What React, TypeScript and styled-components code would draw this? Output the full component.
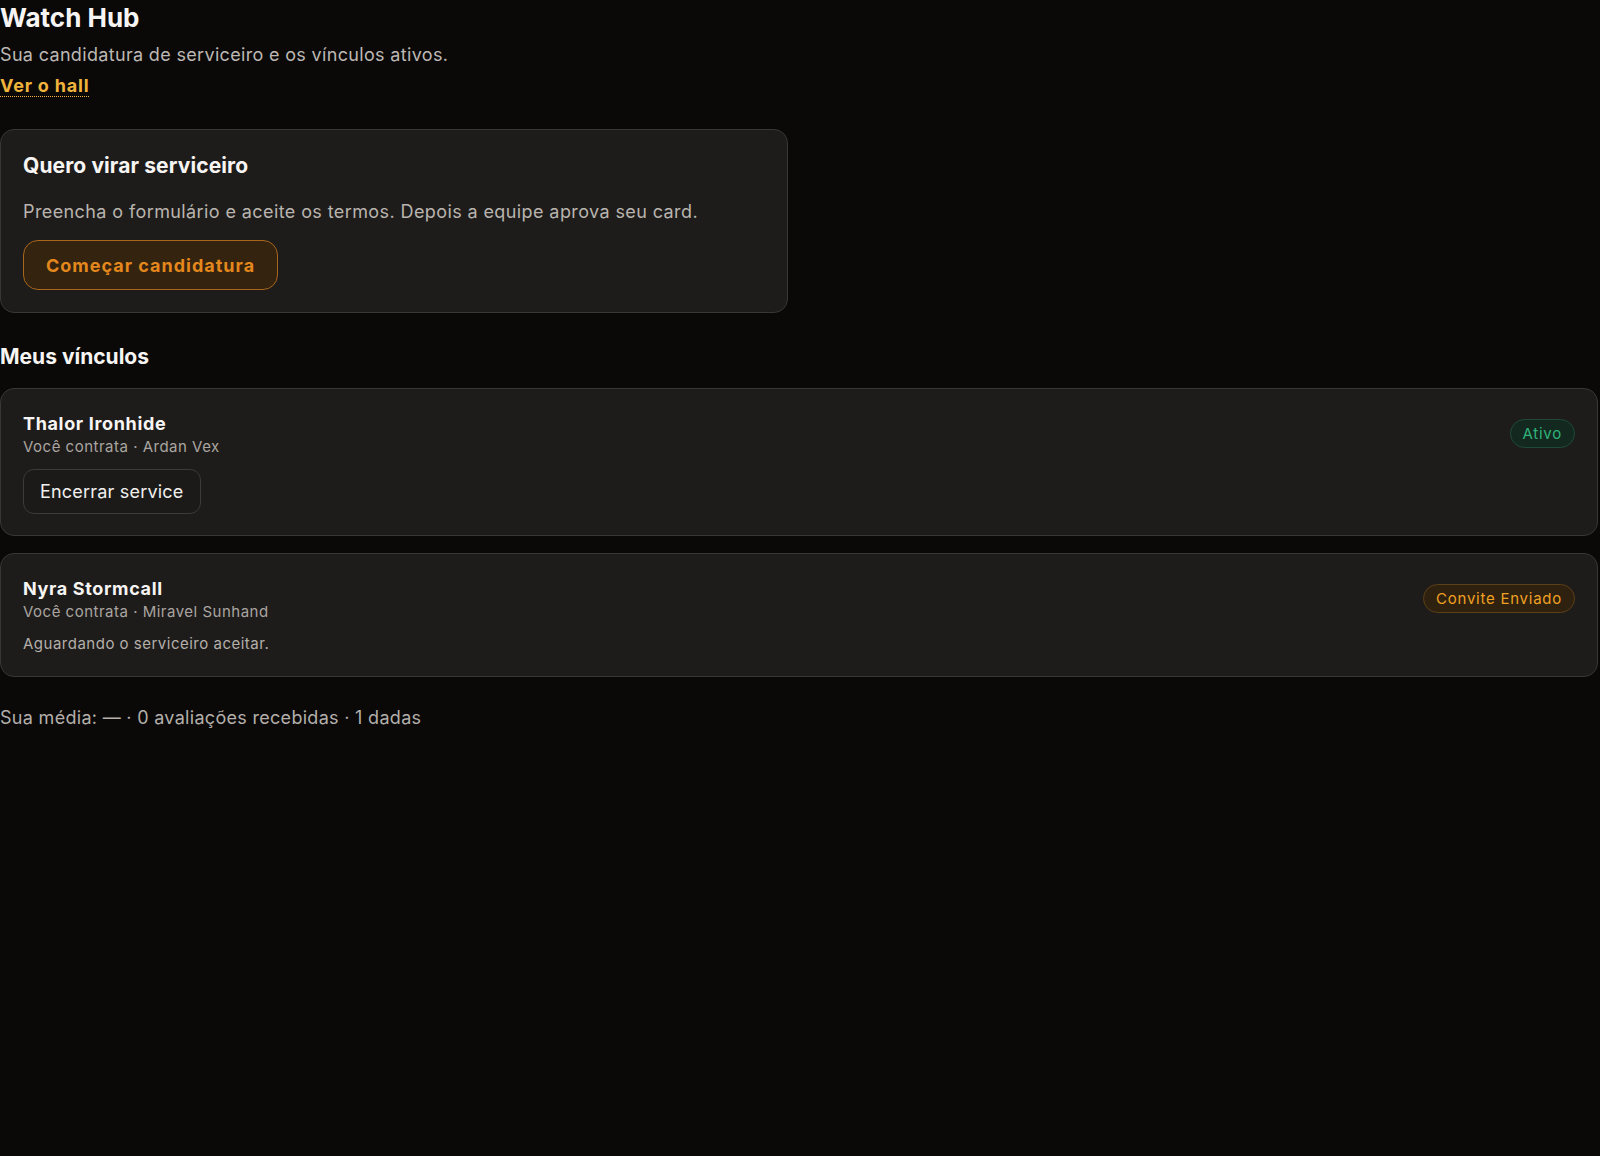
import React from 'react'
import styled, { createGlobalStyle } from 'styled-components'

const GlobalStyle = createGlobalStyle`
	html, body {
		margin: 0;
		padding: 0;
		background: #0a0908;
	}
	body {
		font-family: Inter, 'Noto Sans', 'Liberation Sans', sans-serif;
		color: #f2f0ee;
	}
`

type Tone = 'green' | 'amber'

interface Bond {
	name: string
	partner: string
	status: string
	tone: Tone
	note?: string
	canEnd?: boolean
}

const bonds: Bond[] = [
	{
		name: 'Thalor Ironhide',
		partner: 'Ardan Vex',
		status: 'Ativo',
		tone: 'green',
		canEnd: true,
	},
	{
		name: 'Nyra Stormcall',
		partner: 'Miravel Sunhand',
		status: 'Convite Enviado',
		tone: 'amber',
		note: 'Aguardando o serviceiro aceitar.',
	},
]

export default function App() {
	return (
		<Page>
			<GlobalStyle />
			<Header>
				<Title>Watch Hub</Title>
				<Subtitle>Sua candidatura de serviceiro e os vínculos ativos.</Subtitle>
				<HallLink href="#">Ver o hall</HallLink>
			</Header>

			<ApplyCard>
				<CardTitle>Quero virar serviceiro</CardTitle>
				<CardText>
					Preencha o formulário e aceite os termos. Depois a equipe aprova seu card.
				</CardText>
				<PrimaryButton>Começar candidatura</PrimaryButton>
			</ApplyCard>

			<SectionTitle>Meus vínculos</SectionTitle>
			<BondList>
				{bonds.map((b) => (
					<BondCard key={b.name}>
						<BondInfo>
							<BondName>{b.name}</BondName>
							<BondMeta>Você contrata · {b.partner}</BondMeta>
							{b.canEnd && <GhostButton>Encerrar service</GhostButton>}
							{b.note && <BondNote>{b.note}</BondNote>}
						</BondInfo>
						<Badge $tone={b.tone}>{b.status}</Badge>
					</BondCard>
				))}
			</BondList>

			<Summary>Sua média: — · 0 avaliações recebidas · 1 dadas</Summary>
		</Page>
	)
}

const Page = styled.main`
	display: flex;
	flex-direction: column;
	width: 1598px;
`

const Header = styled.header`
	display: flex;
	flex-direction: column;
	align-items: flex-start;
`

const Title = styled.h1`
	margin: 0;
	font-size: 26px;
	line-height: 36px;
	font-weight: 700;
	letter-spacing: 0;
	color: #f7f5f3;
`

const Subtitle = styled.p`
	margin: 1px 0 0;
	font-size: 18px;
	line-height: 36px;
	letter-spacing: 0.33px;
	color: #bdb8b3;
`

const HallLink = styled.a`
	font-size: 18px;
	line-height: 26px;
	font-weight: 700;
	letter-spacing: 0.8px;
	color: #f0b43c;
	text-decoration: underline dotted;
	text-underline-offset: 4px;
	text-decoration-thickness: 1px;
`

const Card = styled.section`
	box-sizing: border-box;
	background: #1e1c1b;
	border: 1px solid #393634;
	border-radius: 14px;
`

const ApplyCard = styled(Card)`
	width: 788px;
	margin-top: 30px;
	padding: 20px 22px 22px;
	display: flex;
	flex-direction: column;
	align-items: flex-start;
`

const CardTitle = styled.h2`
	margin: 0;
	font-size: 21px;
	line-height: 32px;
	font-weight: 700;
	letter-spacing: 0.1px;
	color: #f7f5f3;
`

const CardText = styled.p`
	margin: 17px 0 0;
	font-size: 18px;
	line-height: 26px;
	letter-spacing: 0.4px;
	color: #b9b4ae;
`

const PrimaryButton = styled.button`
	margin-top: 15px;
	height: 50px;
	padding: 0 22px;
	border-radius: 15px;
	border: 1px solid #a8661c;
	background: #33230f;
	color: #e4871c;
	font-family: inherit;
	font-size: 18px;
	font-weight: 700;
	letter-spacing: 1px;
	cursor: pointer;
`

const SectionTitle = styled.h2`
	margin: 29px 0 0;
	font-size: 21px;
	line-height: 30px;
	font-weight: 700;
	letter-spacing: 0;
	color: #f7f5f3;
`

const BondList = styled.div`
	margin-top: 16px;
	display: flex;
	flex-direction: column;
	gap: 17px;
`

const BondCard = styled(Card)`
	display: flex;
	justify-content: space-between;
	align-items: flex-start;
	padding: 24px 22px 21px;
`

const BondInfo = styled.div`
	display: flex;
	flex-direction: column;
	align-items: flex-start;
`

const BondName = styled.div`
	font-size: 18px;
	line-height: 22px;
	font-weight: 700;
	letter-spacing: 0.65px;
	color: #f7f5f3;
`

const BondMeta = styled.div`
	font-size: 15px;
	line-height: 24px;
	letter-spacing: 0.5px;
	color: #aaa5a0;
`

const GhostButton = styled.button`
	margin-top: 10px;
	height: 45px;
	padding: 0 16px;
	border-radius: 11px;
	border: 1px solid #3d3a38;
	background: #1b1a19;
	color: #f2f0ee;
	font-family: inherit;
	font-size: 18px;
	letter-spacing: 0.2px;
	cursor: pointer;
`

const BondNote = styled.div`
	margin-top: 9px;
	font-size: 15px;
	line-height: 22px;
	letter-spacing: 0.5px;
	color: #b4afaa;
`

const toneStyles: Record<Tone, { fg: string; bg: string; border: string }> = {
	green: { fg: '#2fb27a', bg: '#13291f', border: '#1f4a37' },
	amber: { fg: '#f0a022', bg: '#2e2110', border: '#5c4016' },
}

const Badge = styled.span<{ $tone: Tone }>`
	margin-top: 6px;
	height: 29px;
	box-sizing: border-box;
	display: inline-flex;
	align-items: center;
	padding: 0 12px;
	border-radius: 999px;
	font-size: 15px;
	letter-spacing: 0.75px;
	color: ${(p) => toneStyles[p.$tone].fg};
	background: ${(p) => toneStyles[p.$tone].bg};
	border: 1px solid ${(p) => toneStyles[p.$tone].border};
`

const Summary = styled.p`
	margin: 28px 0 0;
	font-size: 18px;
	line-height: 26px;
	letter-spacing: 0.3px;
	color: #b4afaa;
`
